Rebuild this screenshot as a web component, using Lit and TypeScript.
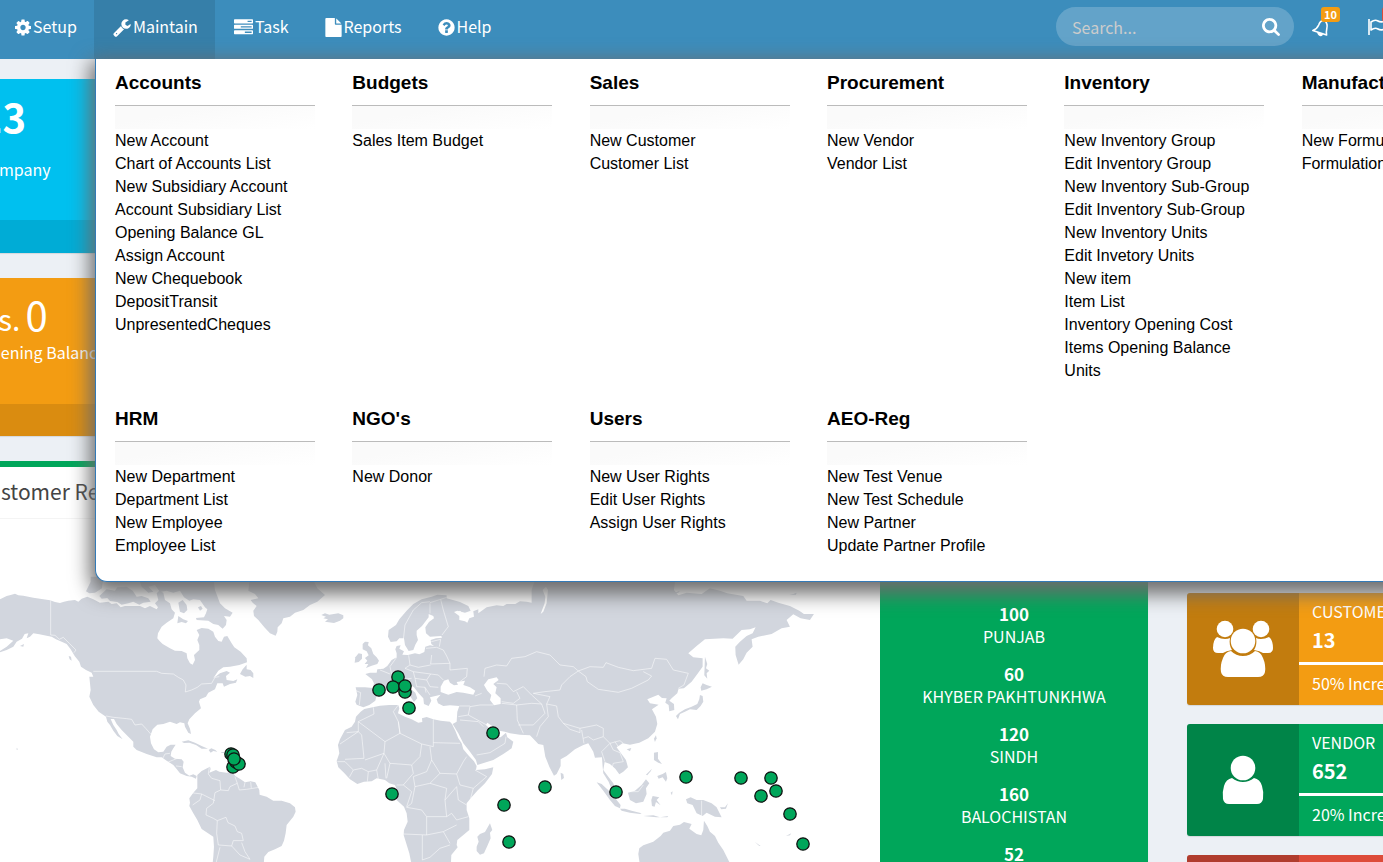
import { LitElement, html, svg, css } from "lit";
import { customElement, property } from "lit/decorators.js";

const ICONS: Record<string, string> = {
  cog: "M1152 896q0-106-75-181t-181-75-181 75-75 181 75 181 181 75 181-75 75-181zm512-109v222q0 12-8 23t-20 13l-185 28q-19 54-39 91 35 50 107 138 10 12 10 25t-9 23q-27 37-99 108t-94 71q-12 0-26-9l-138-108q-44 23-91 38-16 136-29 186-7 28-36 28h-222q-14 0-24.5-8.5t-11.5-21.5l-28-184q-49-16-90-37l-141 107q-10 9-25 9-14 0-25-11-126-114-165-168-7-10-7-23 0-12 8-23 15-21 51-66.5t54-70.5q-27-50-41-99l-183-27q-13-2-21-12.5t-8-23.5v-222q0-12 8-23t19-13l186-28q14-46 39-92-40-57-107-138-10-12-10-24 0-10 9-23 26-36 98.5-107.5t94.5-71.5q13 0 26 10l138 107q44-23 91-38 16-136 29-186 7-28 36-28h222q14 0 24.5 8.5t11.5 21.5l28 184q49 16 90 37l142-107q9-9 24-9 13 0 25 10 129 119 165 170 7 8 7 22 0 12-8 23-15 21-51 66.5t-54 70.5q26 50 41 98l183 28q13 2 21 12.5t8 23.5z",
  wrench: "M448 1472q0-26-19-45t-45-19-45 19-19 45 19 45 45 19 45-19 19-45zm644-420l-682 682q-37 37-90 37-52 0-91-37l-106-108q-38-36-38-90 0-53 38-91l681-681q39 98 114.5 173.5t173.5 114.5zm634-435q0 39-23 106-47 134-164.5 217.5t-258.5 83.5q-185 0-316.5-131.5t-131.5-316.5 131.5-316.5 316.5-131.5q58 0 121.5 16.5t107.5 46.5q16 11 16 28t-16 28l-293 169v224l193 107q5-3 79-48.5t135.5-81 70.5-35.5q15 0 23.5 10t8.5 25z",
  tasks: "M1024 1408h640v-128h-640v128zm-384-512h1024v-128h-1024v128zm640-512h384v-128h-384v128zm512 832v256q0 26-19 45t-45 19h-1664q-26 0-45-19t-19-45v-256q0-26 19-45t45-19h1664q26 0 45 19t19 45zm0-512v256q0 26-19 45t-45 19h-1664q-26 0-45-19t-19-45v-256q0-26 19-45t45-19h1664q26 0 45 19t19 45zm0-512v256q0 26-19 45t-45 19h-1664q-26 0-45-19t-19-45v-256q0-26 19-45t45-19h1664q26 0 45 19t19 45z",
  file: "M1152 512v-472q22 14 36 28l408 408q14 14 28 36h-472zm-128 32q0 40 28 68t68 28h544v1056q0 40-28 68t-68 28h-1344q-40 0-68-28t-28-68v-1600q0-40 28-68t68-28h800v544z",
  help: "M1024 1376v-192q0-14-9-23t-23-9h-192q-14 0-23 9t-9 23v192q0 14 9 23t23 9h192q14 0 23-9t9-23zm256-672q0-88-55.5-163t-138.5-116-170-41q-243 0-371 213-15 24 8 42l132 100q7 6 19 6 16 0 25-12 53-68 86-92 34-24 86-24 48 0 85.5 26t37.5 59q0 38-20 61t-68 45q-63 28-115.5 86.5t-52.5 125.5v36q0 14 9 23t23 9h192q14 0 23-9t9-23q0-19 21.5-49.5t54.5-49.5q32-18 49-28.5t46-35 44.5-48 28-60.5 12.5-81zm384 192q0 209-103 385.5t-279.5 279.5-385.5 103-385.5-103-279.5-279.5-103-385.5 103-385.5 279.5-279.5 385.5-103 385.5 103 279.5 279.5 103 385.5z",
  search: "M1216 832q0-185-131.5-316.5t-316.5-131.5-316.5 131.5-131.5 316.5 131.5 316.5 316.5 131.5 316.5-131.5 131.5-316.5zm512 832q0 52-38 90t-90 38q-54 0-90-38l-343-342q-179 124-399 124-143 0-273.5-55.5t-225-150-150-225-55.5-273.5 55.5-273.5 150-225 225-150 273.5-55.5 273.5 55.5 225 150 150 225 55.5 273.5q0 220-124 399l343 343q37 37 37 90z",
};

/* viewBox of each glyph, trimmed to its own ink width */
const BOXES: Record<string, string> = {
  cog: "128 0 1536 1792",
  wrench: "64 0 1664 1792",
  tasks: "0 0 1792 1792",
  file: "128 0 1536 1792",
  help: "128 0 1536 1792",
  search: "64 128 1664 1664",
};

const NAV = [
  { icon: "cog", label: "Setup", width: 16 },
  { icon: "wrench", label: "Maintain", width: 18, active: true },
  { icon: "tasks", label: "Task", width: 19 },
  { icon: "file", label: "Reports", width: 17 },
  { icon: "help", label: "Help", width: 17 },
];

const MENU: { title: string; links: string[] }[] = [
  {
    title: "Accounts",
    links: ["New Account", "Chart of Accounts List", "New Subsidiary Account", "Account Subsidiary List", "Opening Balance GL", "Assign Account", "New Chequebook", "DepositTransit", "UnpresentedCheques"],
  },
  { title: "Budgets", links: ["Sales Item Budget"] },
  { title: "Sales", links: ["New Customer", "Customer List"] },
  { title: "Procurement", links: ["New Vendor", "Vendor List"] },
  {
    title: "Inventory",
    links: ["New Inventory Group", "Edit Inventory Group", "New Inventory Sub-Group", "Edit Inventory Sub-Group", "New Inventory Units", "Edit Invetory Units", "New item", "Item List", "Inventory Opening Cost", "Items Opening Balance", "Units"],
  },
  { title: "Manufacturing", links: ["New Formulation", "Formulation List"] },
  { title: "HRM", links: ["New Department", "Department List", "New Employee", "Employee List"] },
  { title: "NGO's", links: ["New Donor"] },
  { title: "Users", links: ["New User Rights", "Edit User Rights", "Assign User Rights"] },
  { title: "AEO-Reg", links: ["New Test Venue", "New Test Schedule", "New Partner", "Update Partner Profile"] },
];

const REGIONS = [
  { value: "100", name: "PUNJAB" },
  { value: "60", name: "KHYBER PAKHTUNKHWA" },
  { value: "120", name: "SINDH" },
  { value: "160", name: "BALOCHISTAN" },
  { value: "52", name: "" },
];

/* Land outlines, one list for each part of the map, three units to a pixel. */
const AMERICAS = [
  "-60,120 -30,100 0,88 20,78 32,75 45,71 55,76 70,77 100,83 125,87 150,91 165,96 180,99 192,95 205,92 225,90 235,95 245,86 262,80 280,88 300,98 325,95 335,102 350,100 362,112 375,108 400,108 420,108 435,115 450,108 470,118 474,112 465,100 475,90 470,70 478,62 490,68 495,90 510,100 515,118 525,128 520,145 500,158 485,170 474,190 472,205 478,212 488,222 510,235 525,242 545,243 560,250 562,265 570,280 578,284 585,270 582,255 598,240 598,225 592,210 598,195 590,180 605,174 625,176 640,185 645,200 655,213 665,215 672,200 682,198 695,220 703,232 722,245 740,265 741,277 718,285 690,290 670,292 655,302 640,325 660,310 680,303 690,308 678,318 680,330 700,333 712,328 708,338 690,342 672,350 668,340 652,340 645,358 625,368 618,380 600,388 597,395 603,415 585,430 568,448 563,460 570,476 573,492 565,488 555,470 553,460 540,457 530,462 510,455 490,462 472,464 458,478 450,500 453,520 462,538 475,547 490,545 500,530 512,524 527,524 520,535 514,545 512,558 525,566 545,568 551,575 548,592 555,608 568,617 580,613 590,618 588,626 575,620 560,618 540,610 530,597 520,585 500,572 485,562 470,562 440,552 410,540 400,530 400,515 385,500 365,480 350,462 342,447 332,447 340,465 350,480 356,492 368,508 352,498 340,482 330,465 322,455 318,440 296,425 280,405 268,380 272,360 270,340 268,320 280,320 275,308 258,300 243,290 238,275 224,258 212,238 200,222 185,215 168,208 155,200 140,197 118,193 100,190 90,200 80,205 85,190 74,192 66,206 50,215 40,230 20,240 -10,250 20,230 40,212 20,205 0,208 -60,190",
  "258,64 272,35 272,20 310,20 306,55 285,68 268,70",
  "298,78 320,58 345,62 352,52 380,50 398,62 410,80 425,78 445,85 452,95 430,98 418,104 400,95 385,100 365,104 352,96 330,93 322,84 305,86",
  "415,20 640,20 645,60 660,100 675,115 698,128 690,140 672,138 680,150 678,165 668,176 655,165 640,162 625,152 590,150 588,144 612,142 618,130 622,118 615,112 600,90 580,88 568,92 552,82 540,62 520,68 500,62 480,66 465,45 445,50 460,65 445,68 425,50",
  "535,98 548,90 560,105 562,120 552,130 540,125",
  "594,112 603,108 608,116 600,122",
  "532,160 535,138 550,148 564,153 558,160 545,156",
  "720,312 728,298 740,284 740,298 752,300 760,310 760,324 750,318 736,320",
  "545,515 565,511 585,518 605,528 624,536 605,536 588,525 568,518 552,519",
  "626,540 634,535 646,540 652,545 640,543 632,548",
  "664,546 672,546 672,549 664,549",
  "206,258 213,260 215,272 209,268",
  "60,228 72,222 70,230",
  "50,533 54,538 50,540",
  "592,615 605,603 630,590 632,597 628,608 648,600 658,605 680,608 697,606 706,618 722,628 735,637 752,634 766,637 778,660 779,674 800,680 820,692 845,692 870,700 885,712 887,725 880,740 860,765 857,790 852,812 845,828 825,838 805,846 793,860 790,900 636,900 640,860 642,830 640,800 605,777 592,750 580,730 568,708 570,698 568,685 580,668 592,655 592,635",
];

const WEST = [
  "55,62 60,20 245,20 262,55 285,75 262,95 240,105 220,120 195,128 180,140 160,145 155,160 143,172 142,185 137,197 120,190 103,172 85,150 72,138 70,122 80,108 68,98 62,90 85,85 75,72",
  "274,135 285,130 298,134 325,130 340,136 340,145 330,152 312,159 285,155 294,148 280,145 288,140",
  "398,222 405,215 416,216 414,226 424,235 430,252 440,262 447,272 442,282 425,287 408,294 415,282 404,282 412,272 405,264 416,256 410,244 398,238",
  "376,262 386,250 396,252 396,266 386,276 374,278",
  "403,417 428,412 450,407 478,405 505,405 508,415 504,430 525,440 545,448 565,458 577,456 576,445 590,441 610,448 632,452 660,455 666,462 676,482 685,505 695,520 700,538 715,556 732,574 740,588 738,600 765,598 790,592 786,612 765,640 742,662 722,685 710,700 710,720 718,745 718,780 700,795 682,810 680,825 683,832 664,855 662,900 548,900 538,850 521,795 522,780 533,755 530,730 522,710 500,690 498,675 500,658 495,645 478,640 465,630 440,625 425,634 402,635 382,642 360,628 342,608 325,592 320,573 328,550 324,525 330,508 345,480 365,470 375,455 378,440 392,425",
  "780,760 787,780 780,788 782,805 772,828 762,850 750,854 740,843 740,830 746,815 742,800 750,792 765,786",
];

/* Europe and Asia share one outline. */
const EURASIA = [
  "377,352 405,352 428,354 432,340 426,328 406,312 420,308 440,308 442,298 460,296 472,288 485,270 500,262 500,250 496,238 500,228 512,226 508,236 522,244 517,254 534,255 555,250 568,253 583,246 586,230 600,226 612,228 604,222 602,210 618,205 636,203 634,198 600,200 588,190 586,172 597,156 612,145 610,138 596,132 596,142 588,152 576,168 560,182 560,195 564,210 556,224 550,240 536,243 525,225 522,205 508,205 500,214 482,216 474,200 476,180 498,165 508,148 530,122 550,102 575,88 605,80 622,74 650,76 650,85 690,96 715,108 722,122 705,128 682,122 672,126 688,138 688,150 705,154 712,158 718,145 732,140 730,124 745,118 745,130 770,112 800,106 820,108 830,102 856,102 870,94 890,95 905,98 905,60 915,30 1336,30 1332,60 1345,76 1370,68 1415,72 1440,55 1470,62 1492,70 1540,78 1550,92 1590,92 1612,100 1622,90 1645,98 1680,108 1708,122 1722,132 1752,132 1740,150 1712,145 1690,133 1670,150 1680,170 1655,175 1625,192 1585,200 1565,208 1568,230 1550,248 1540,268 1526,284 1517,255 1516,230 1530,215 1550,198 1568,190 1577,172 1560,178 1535,180 1508,206 1480,205 1425,208 1400,228 1375,250 1390,262 1418,265 1418,290 1400,315 1385,335 1362,355 1346,356 1342,370 1325,385 1318,392 1332,402 1333,420 1318,424 1316,405 1306,398 1310,385 1296,384 1285,374 1252,388 1260,400 1286,404 1266,418 1278,440 1282,462 1275,485 1255,505 1228,518 1200,524 1178,520 1160,532 1172,548 1188,570 1194,592 1180,605 1168,613 1156,596 1140,582 1124,576 1120,600 1135,620 1150,640 1158,665 1170,675 1145,658 1136,635 1120,610 1118,590 1116,562 1095,563 1090,545 1075,520 1060,525 1035,538 1010,558 992,568 992,588 980,612 972,617 958,590 946,560 940,525 925,522 900,496 870,494 840,490 825,485 808,482 790,470 772,458 768,465 785,482 795,500 812,502 828,488 832,502 850,515 845,535 820,552 790,570 742,585 738,570 720,545 700,520 685,490 668,462 680,455 682,425 688,408 660,406 640,408 624,400 620,388 632,374 600,382 604,392 596,408 582,402 580,385 566,370 552,352 542,345 540,355 556,368 562,385 552,396 540,378 520,362 504,346 490,350 472,356 452,362 440,375 436,392 418,405 400,412 380,404 376,395 382,375",
  "1425,260 1432,282 1428,295 1438,302 1430,310 1432,326 1423,316 1424,290",
  "1412,352 1418,340 1430,345 1446,350 1430,358 1414,362",
  "1410,375 1418,378 1420,395 1412,408 1400,420 1380,418 1365,425 1350,432 1344,448 1338,438 1348,428 1365,418 1385,410 1402,402 1408,388",
  "992,608 1000,612 1002,624 994,630",
  "1272,506 1278,496 1280,505 1275,516",
  "1190,538 1204,534 1200,544",
  "1272,548 1284,546 1284,566 1296,582 1285,578 1272,570",
  "1282,618 1298,612 1308,606 1312,625 1308,635 1298,622 1286,626",
  "1248,614 1266,596 1262,604 1252,616",
  "1100,637 1115,642 1140,665 1160,690 1172,705 1170,715 1155,708 1140,690 1120,662",
  "1170,716 1185,716 1205,722 1235,730 1230,732 1200,728 1175,722",
  "1194,668 1215,662 1235,645 1248,628 1258,640 1248,655 1250,672 1240,695 1218,700 1200,690",
  "1264,690 1268,678 1288,682 1280,690 1292,706 1278,696 1274,710 1266,708",
  "1240,738 1270,736 1290,742 1315,738 1312,742 1280,742",
  "1322,668 1328,664 1326,676",
  "1368,688 1382,682 1400,690 1420,690 1445,700 1460,712 1475,742 1455,740 1430,728 1418,738 1400,730 1388,705 1372,700",
  "1470,712 1485,712 1494,700 1488,716 1474,718",
  "1574,815 1592,828 1588,828",
  "1668,798 1684,790 1680,796",
  "1325,72 1345,68 1350,62",
  "1690,72 1700,68 1698,74 1678,74",
  "1228,835 1240,826 1270,815 1292,798 1300,788 1320,782 1330,768 1350,764 1362,756 1385,762 1378,776 1400,792 1414,796 1420,780 1422,752 1432,768 1440,785 1455,798 1465,818 1480,840 1500,880 1500,900 1232,900 1225,852",
];

/* Inland water cut back out of the land. */
const WATER = [
  "632,366 632,350 642,332 655,328 660,338 672,346 684,344 680,336 705,332 700,345 720,352 736,362 730,374 700,368 680,366 655,374",
  "762,345 775,328 800,322 806,330 790,342 800,352 796,370 812,385 812,402 792,406 780,390 784,375 772,362",
  "938,60 948,50 954,60 950,100 940,125 932,132 944,100 946,80",
  "690,122 700,132 706,140 680,128",
];

const BORDERS_AM = [
  "152,91 152,195 165,196 178,208 190,202 208,220 228,240 222,248",
  "280,304 470,304 485,310 520,312 535,322 550,330 558,345 556,366 575,360 592,352 605,342 635,340 645,322 658,320",
  "318,438 340,442 380,446 395,448 405,465 425,462 438,476 452,492",
  "488,566 495,552 510,550 M505,576 530,566 M545,590 528,588",
  "628,592 625,612 635,625 660,632 662,660 645,668 640,700 620,715 618,735 640,745 652,752 678,742 684,758 705,768 712,785 725,790 730,812",
  "662,660 685,662 690,650 712,640 705,620 M712,640 718,660 740,658 778,652 M735,637 732,652 M752,636 754,654",
  "572,668 605,672 645,692 M605,672 600,690 578,705",
  "652,752 650,790 655,825 695,828 700,812 730,812 M660,832 648,880 M695,828 720,855 750,868 735,845 725,818",
];

const BORDERS_OLD = [
  "520,210 525,165 550,120 575,98 600,95 M600,130 600,100 M600,98 632,88 650,82 M632,88 640,120 655,170 636,195",
  "604,215 632,208 628,230 M588,235 620,232 640,240 650,258 660,280 M605,255 602,282 660,280 660,300 712,295 710,320 690,335",
  "536,256 540,285 565,292 602,285 M540,285 525,295 550,305 602,312 M500,262 480,290 485,312 M450,300 480,312 M550,305 555,325 590,330 602,312 625,315 640,330 M480,345 500,330 545,325 M555,325 560,350 585,352 588,368 M590,330 600,350 625,352 M585,352 600,375",
  "378,362 392,368 388,405 M430,355 445,360",
  "430,412 432,432 385,455 385,485 350,488 M385,455 465,515 510,490 505,455 490,425 505,405 M505,455 510,490 575,522 610,530 610,448 M610,518 690,520 M330,522 385,485 395,495 402,565 345,568 M465,515 462,550 405,570 M575,522 570,560 545,585 480,580 462,550",
  "322,575 345,575 370,600 395,595 415,605 440,600 462,550 M370,600 358,622 M415,605 412,635 M440,600 445,628 M465,580 468,625 M480,580 470,625 M545,585 550,610 520,645 500,645",
  "600,530 605,570 590,605 550,620 M605,570 630,610 680,612 700,575 710,560 M550,620 555,650 600,640 630,610 M520,645 545,665 530,710 M555,650 545,700 530,712 M680,612 690,645 730,655 770,620 735,600 M730,655 722,685",
  "600,640 650,655 645,690 650,740 590,740 575,720 530,712 M645,690 680,650 M680,650 685,690 710,705 M650,740 665,730 680,750 715,740 M590,740 590,795 520,792 M590,795 640,785 680,765 M640,785 660,820 M577,795 577,870 600,862 630,835 660,825",
  "735,378 755,370 M688,408 720,408 M685,440 715,435 720,410 750,405 M715,435 770,465 M690,450 745,455 760,470 M740,555 780,548 825,520 828,500",
  "762,320 765,295 800,285 830,288 845,265 885,260 920,245 960,255 990,285 1030,290 1045,303 1080,290 1120,292 1128,278 1165,292 1210,302 1265,295 1275,265 1310,268 1330,300 1375,310 1362,345 1345,355",
  "1045,303 1068,320 1072,335 1105,358 1165,367 1205,355 1255,330 1265,318 1240,305 M1045,303 1020,320 995,345 990,360 945,365 910,370 960,380 950,402 980,408",
  "800,340 830,342 850,365 880,350 905,375 M815,395 850,400 870,385 860,365 M750,405 790,405 M815,400 860,405 905,400 935,402 M860,405 862,450 880,490",
  "905,375 935,402 945,430 910,465 865,465 M950,402 955,440 930,470 920,500 M980,408 985,440 1000,460 1050,475 1100,465 1120,475 1120,500 1090,510 M1000,460 1020,478 1050,488 1050,475 M1055,480 1062,520",
  "1090,510 1075,500 1060,505 M1120,500 1140,520 1115,545 1125,575 M1140,520 1170,512 1180,520 M1140,520 1150,540 1170,548 1180,575 1150,580 1145,600 M1155,515 1185,560",
  "1415,692 1415,738 M1198,665 1225,665 1240,645",
];

const PINS = [
  [398, 677], [393, 687], [379, 690], [405, 692], [405, 686], [409, 708], [493, 733], [392, 794], [504, 805],
  [509, 842], [545, 787], [616, 792], [686, 777], [741, 778], [771, 778], [776, 791], [761, 796], [790, 814],
  [803, 844], [231, 754], [233, 755], [233, 767], [236, 762], [239, 764], [234, 759],
];

const toPath = (points: string) => points.split(" M").map((part) => "M" + part.replace(/^M/, "")).join(" ");

@customElement("fa-glyph")
class FaGlyph extends LitElement {
  @property() name = "cog";

  static styles = css`
    :host { display: flex; }
    svg { display: block; width: 100%; height: 100%; fill: currentColor; }
  `;

  render() {
    return html`<svg viewBox=${BOXES[this.name]} aria-hidden="true"><path d=${ICONS[this.name]}></path></svg>`;
  }
}

@customElement("world-map")
class WorldMap extends LitElement {
  static styles = css`
    :host { display: block; }
    svg { display: block; width: 100%; height: 100%; }
    .land { fill: #d2d6de; }
    .water { fill: #fff; }
    .border { fill: none; stroke: #fff; stroke-width: 2; stroke-opacity: 0.8; stroke-linejoin: round; }
    .pin { fill: #00a65a; stroke: #111; stroke-width: 1.3; }
  `;

  render() {
    const shapes = (list: string[], name: string) => list.map((p) => svg`<polygon class=${name} points=${p}></polygon>`);
    const lines = (list: string[]) => list.map((p) => svg`<path class="border" d=${toPath(p)}></path>`);
    return html`
      <svg viewBox="-33 519 913 344" preserveAspectRatio="xMinYMin slice" role="img" aria-label="World map">
        <g transform="translate(0 570) scale(0.3333)">${shapes(AMERICAS, "land")}${lines(BORDERS_AM)}</g>
        <g transform="translate(230 570) scale(0.3333)">
          ${shapes(WEST, "land")}${shapes(EURASIA, "land")}${shapes(WATER, "water")}${lines(BORDERS_OLD)}
        </g>
        ${PINS.map(([x, y]) => svg`<circle class="pin" cx=${x} cy=${y} r="6.2"></circle>`)}
      </svg>
    `;
  }
}

@customElement("app-root")
class AppRoot extends LitElement {
  static styles = css`
    :host {
      display: block;
      position: relative;
      height: 100vh;
      overflow: hidden;
      background: #ecf0f5;
      color: #333;
      font-family: "Noto Sans CJK SC", "Noto Sans", sans-serif;
      font-size: 16px;
      line-height: 22px;
    }
    * { box-sizing: border-box; }
    a { color: inherit; text-decoration: none; }
    h2, h3, p, ul { margin: 0; padding: 0; font-weight: normal; list-style: none; }

    .topbar { display: flex; justify-content: space-between; height: 59px; background: #3c8dbc; color: #fff; }
    .nav { display: flex; margin-left: -3px; }
    .nav-link { display: flex; align-items: center; gap: 2px; height: 59px; padding: 0 17px 8px 18px; }
    .nav-link + .nav-link { padding-left: 19px; }
    .nav-link.active { background: #367fa9; }
    .nav-link fa-glyph { height: 19px; margin-top: 3px; }
    .tools { display: flex; align-items: flex-start; margin-right: -23px; }
    .search { display: flex; align-items: center; width: 238px; height: 39px; margin-top: 7px; padding: 0 14px 0 16px; border-radius: 20px; background: rgba(255, 255, 255, 0.2); }
    .search input { flex: 1; min-width: 0; padding: 0; border: 0; outline: 0; background: none; color: #fff; font: inherit; }
    .search input::placeholder { color: #ccc; opacity: 1; }
    .search button { display: flex; padding: 0; border: 0; background: none; color: #fff; }
    .search fa-glyph { width: 18px; height: 18px; }
    .tool { position: relative; display: block; width: 56px; height: 59px; padding: 17px 0 0 17px; }
    .tool svg { display: block; width: 22px; height: 22px; fill: none; stroke: #fff; stroke-width: 1.6; stroke-linejoin: round; }
    .tool .solid { fill: #fff; stroke: none; }
    .badge { position: absolute; left: 27px; top: 7px; width: 19px; height: 15px; border-radius: 3px; background: #f39c12; color: #fff; font-size: 11px; font-weight: 700; line-height: 15px; text-align: center; }
    .badge.red { left: 32px; background: #dd4b39; }

    .menu { position: absolute; left: 95px; top: 59px; display: grid; grid-template-columns: repeat(6, 1fr); row-gap: 26px; width: 1445px; padding: 13px 0 24px 19px; border: 1px solid #337ab7; border-top: 0; border-radius: 0 0 12px 12px; background: #fff; color: #000; box-shadow: 0 7px 20px 5px #6c6c6c; font-family: "Liberation Sans", Arial, sans-serif; }
    .group h3 { font-size: 19px; font-weight: 700; line-height: 22px; }
    .rule { width: 200px; height: 24px; margin: 11px 0 0; border: 0; border-top: 1px solid #bbb; background: linear-gradient(170deg, #fafafa 30%, #fff); }
    .group li { line-height: 23px; }

    .main { display: flex; flex-direction: column; margin: 20px -144px 0 -33px; gap: 25px; }
    .tile { width: 400px; border-radius: 3px; color: #fff; box-shadow: 0 1px 1px rgba(0, 0, 0, 0.1); }
    .tile.aqua { background: #00c0ef; }
    .tile.orange { background: #f39c12; }
    .tile-body { padding: 12px 12px 0; }
    .tile.aqua .tile-body { height: 141px; }
    .tile.orange .tile-body { height: 126px; }
    .tile-value { font-size: 40px; font-weight: 700; line-height: 50px; }
    .tile.orange .tile-value { font-weight: 400; line-height: 48px; }
    .tile-value small { margin-right: 5px; font-size: 30px; }
    .tile-text { line-height: 22px; }
    .tile.aqua .tile-text { padding-top: 17px; }
    .tile.orange .tile-text { line-height: 20px; }
    .tile-foot { height: 33px; background: rgba(0, 0, 0, 0.1); }
    .tile.orange .tile-foot { height: 32px; }

    .row { display: grid; grid-template-columns: minmax(0, 1fr) 340px; gap: 39px; align-items: start; }
    .card { border-top: 6px solid #00a65a; border-radius: 3px; background: #fff; box-shadow: 0 1px 1px rgba(0, 0, 0, 0.1); }
    .card h2 { height: 52px; padding: 12px 8px; border-bottom: 1px solid #f4f4f4; color: #444; font-size: 21px; line-height: 24px; }
    .card-body { display: flex; }
    world-map { flex: 1; height: 344px; }
    .regions { width: 268px; padding-top: 46px; background: #00a65a; color: #fff; text-align: center; }
    .regions div { height: 60px; }
    .regions .capital { height: 37px; line-height: 20px; }
    .regions strong { display: block; font-size: 17px; line-height: 23px; }

    .boxes { display: flex; flex-direction: column; gap: 19px; padding-top: 132px; }
    .box { display: flex; height: 112px; border-radius: 3px; color: #fff; box-shadow: 0 1px 1px rgba(0, 0, 0, 0.1); overflow: hidden; }
    .box.orange { background: #f39c12; }
    .box.green { background: #00a65a; }
    .box.red { background: #dd4b39; }
    .box-icon { display: flex; align-items: center; justify-content: center; width: 112px; background: rgba(0, 0, 0, 0.2); }
    .box-icon svg { width: 62px; height: 58px; fill: #fff; }
    .box-body { flex: 1; padding-top: 6px; }
    .box-body p, .box-body strong { display: block; padding: 0 13px; line-height: 24px; }
    .box-body strong { padding-top: 5px; font-size: 20px; }
    .box-body hr { height: 3px; margin: 10px 0 6px; border: 0; background: #fff; }
  `;

  private menuGroup(group: { title: string; links: string[] }) {
    return html`
      <section class="group">
        <h3>${group.title}</h3>
        <hr class="rule" />
        <ul>${group.links.map((l) => html`<li><a href="#">${l}</a></li>`)}</ul>
      </section>
    `;
  }

  private infoBox(tone: string, icon: unknown, label: string, value: string, note: string) {
    return html`
      <article class="box ${tone}">
        <div class="box-icon">${icon}</div>
        <div class="box-body"><p>${label}</p><strong>${value}</strong><hr /><p>${note}</p></div>
      </article>
    `;
  }

  render() {
    const people = html`
      <svg viewBox="0 0 62 58" aria-hidden="true">
        <circle cx="13" cy="9" r="8.3"></circle>
        <circle cx="49" cy="9" r="8.3"></circle>
        <path d="M5 17Q9 19 13 19Q16 19 18 18C17 23 18 27 20 30Q14 31 11 33H6Q1 33 1 28Q1 20 5 17Z"></path>
        <path d="M57 17Q53 19 49 19Q46 19 44 18C45 23 44 27 42 30Q48 31 51 33H56Q61 33 61 28Q61 20 57 17Z"></path>
        <circle cx="31" cy="21" r="12.3"></circle>
        <path d="M19 31Q24 36 31 36Q38 36 43 31Q49 32 51 38Q54 45 53 52Q52 57 46 57H16Q10 57 9 52Q8 45 11 38Q13 32 19 31Z"></path>
      </svg>`;
    const person = html`
      <svg viewBox="0 0 62 58" aria-hidden="true">
        <circle cx="31" cy="17" r="12.3"></circle>
        <path d="M20 27Q25 31 31 31Q37 31 42 27Q48 28 50 35Q52 41 51 48Q50 53 45 53H17Q12 53 11 48Q10 41 12 35Q14 28 20 27Z"></path>
      </svg>`;
    return html`
      <header class="topbar">
        <nav class="nav">
          ${NAV.map(
            (n) => html`
              <a class="nav-link ${n.active ? "active" : ""}" href="#">
                <fa-glyph name=${n.icon} style="width:${n.width}px"></fa-glyph>${n.label}
              </a>
            `
          )}
        </nav>
        <div class="tools">
          <form class="search" role="search">
            <input type="search" aria-label="Search" placeholder="Search..." />
            <button type="button" aria-label="Search"><fa-glyph name="search"></fa-glyph></button>
          </form>
          <a class="tool" href="#" aria-label="Notifications">
            <svg viewBox="0 0 22 22">
              <path d="M1.8 13.4L15.6 18C14.4 14 16.8 11 16 7.5Q15 3.5 12 3.5Q9 4 7.7 8Q6 12 1.8 13.4Z"></path>
              <path class="solid" d="M6 15L12 17Q11.5 19.5 9.5 19.2Q6.5 18.5 6 15Z"></path>
            </svg>
            <span class="badge">10</span>
          </a>
          <a class="tool" href="#" aria-label="Tasks">
            <svg viewBox="0 0 22 22">
              <path d="M2 2V18M4 5Q8 2 11 4Q14 6 19 3.5V11.5Q14 14 11 12Q8 10 4 13Z"></path>
            </svg>
            <span class="badge red"></span>
          </a>
        </div>
      </header>

      <main class="main">
        <section class="tile aqua">
          <div class="tile-body"><p class="tile-value">13</p><p class="tile-text">Company</p></div>
          <div class="tile-foot"></div>
        </section>
        <section class="tile orange">
          <div class="tile-body"><p class="tile-value"><small>Rs.</small>0</p><p class="tile-text">Opening Balance</p></div>
          <div class="tile-foot"></div>
        </section>
        <div class="row">
          <section class="card">
            <h2>Customer Report</h2>
            <div class="card-body">
              <world-map></world-map>
              <div class="regions">
                <div class="capital">ISLAMABAD CAPITAL TERRITORY</div>
                ${REGIONS.map((r) => html`<div><strong>${r.value}</strong>${r.name}</div>`)}
              </div>
            </div>
          </section>
          <aside class="boxes">
            ${this.infoBox("orange", people, "CUSTOMERS", "13", "50% Increase in 30 Days")}
            ${this.infoBox("green", person, "VENDOR", "652", "20% Increase in 30 Days")}
            ${this.infoBox("red", "", "", "", "")}
          </aside>
        </div>
      </main>

      <div class="menu">${MENU.map((g) => this.menuGroup(g))}</div>
    `;
  }
}
